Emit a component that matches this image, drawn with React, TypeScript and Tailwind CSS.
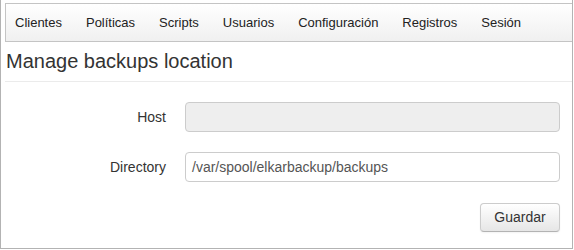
export default function App() {
  const menu = ["Clientes", "Políticas", "Scripts", "Usuarios", "Configuración", "Registros", "Sesión"];

  return (
    <div className="w-[574px] h-[250px] bg-white font-['Liberation_Sans',Arial,sans-serif] text-[#333]">
      <div className="w-[573px] h-[249px] border-l border-r border-b border-[#b3b3b3] pt-[3px] pl-[4px]">
        <div className="h-[39px] flex items-center border-t border-b border-l border-[#c4c4c4] bg-gradient-to-b from-white to-[#f0f0f0]">
          {menu.map((item) => (
            <span key={item} className="px-[12px] first:pl-[9px] pt-[1px] text-[13px] text-[#222]">
              {item}
            </span>
          ))}
        </div>

        <h1 className="mt-[7px] ml-[1px] text-[20px] leading-[24px] text-[#333]">Manage backups location</h1>
        <div className="mt-[8px] border-t border-[#ebebeb]" />

        <div className="mt-[20px] flex flex-col gap-[20px]">
          <div className="flex items-center">
            <label className="w-[161px] text-right text-[14px]">Host</label>
            <div className="ml-[19px] w-[375px] h-[30px] rounded-[4px] border border-[#ccc] bg-[#eee]" />
          </div>
          <div className="flex items-center">
            <label className="w-[161px] text-right text-[14px]">Directory</label>
            <div className="ml-[19px] w-[375px] h-[30px] rounded-[4px] border border-[#ccc] bg-white flex items-center px-[6px] text-[14px] text-[#555]">
              /var/spool/elkarbackup/backups
            </div>
          </div>
        </div>

        <div className="mt-[21px] flex justify-end pr-[12px]">
          <button className="w-[80px] h-[29px] rounded-[4px] border border-[#ccc] border-b-[#b3b3b3] bg-gradient-to-b from-white to-[#e6e6e6] text-[14px] text-[#333] shadow-[0_1px_2px_rgba(0,0,0,0.05)]">
            Guardar
          </button>
        </div>
      </div>
    </div>
  );
}
